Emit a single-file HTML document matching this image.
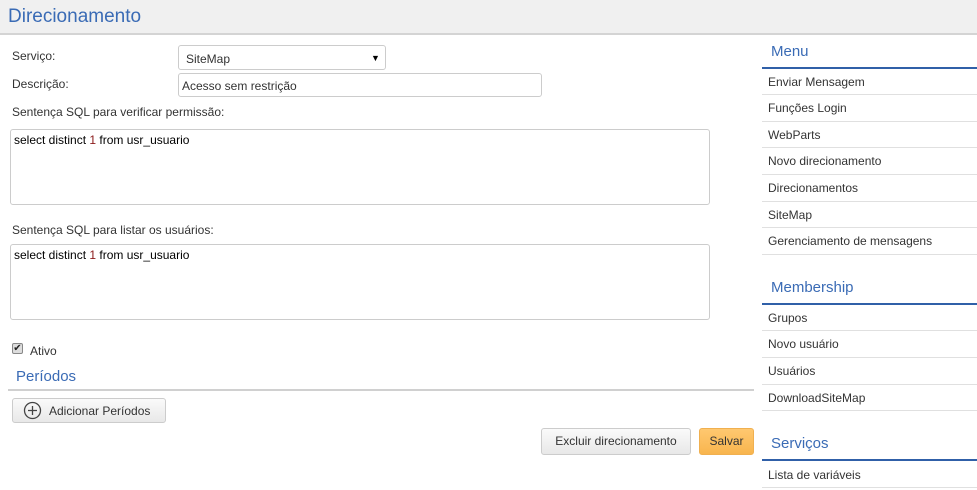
<!DOCTYPE html>
<html><head><meta charset="utf-8"><style>
*{box-sizing:border-box;margin:0;padding:0}
body{width:977px;height:490px;overflow:hidden;background:#fff;font-family:"Liberation Sans",sans-serif;font-size:12px;color:#333;position:relative}
.a{position:absolute;white-space:nowrap}
.hdr{left:0;top:0;width:977px;height:35px;background:#f0f0f0;border-bottom:2px solid #d4d4d4}
.blue{color:#3a6bb5}
.box{position:absolute;border:1px solid #ccc;border-radius:3px;background:#fff}
.sh{position:absolute;left:762px;width:215px;height:2px;background:#3060a8}
.sep{position:absolute;left:762px;width:215px;height:1px;background:#e0e0e0}
.mi{position:absolute;left:768px;font-size:12px;color:#333}
.btn{position:absolute;border:1px solid #ccc;border-radius:3px;background:linear-gradient(#fafafa,#e8e8e8);font-size:12px;color:#333;text-align:center}
</style></head><body>
<div class="a hdr"></div>
<div class="a blue" style="left:8px;top:6px;font-size:19px">Direcionamento</div>

<div class="a" style="left:12px;top:49px">Serviço:</div>
<div class="box" style="left:178px;top:45px;width:208px;height:25px"></div>
<div class="a" style="left:186px;top:52px">SiteMap</div>
<div class="a" style="left:371px;top:53px;font-size:9px;color:#000">▼</div>
<div class="a" style="left:12px;top:77px">Descrição:</div>
<div class="box" style="left:178px;top:73px;width:364px;height:24px"></div>
<div class="a" style="left:182px;top:79px">Acesso sem restrição</div>
<div class="a" style="left:12px;top:105px">Sentença SQL para verificar permissão:</div>
<div class="box" style="left:10px;top:129px;width:700px;height:76px"></div>
<div class="a" style="left:14px;top:133px;color:#000">select distinct <span style="color:#8b1a1a">1</span> from usr_usuario</div>
<div class="a" style="left:12px;top:223px">Sentença SQL para listar os usuários:</div>
<div class="box" style="left:10px;top:244px;width:700px;height:76px"></div>
<div class="a" style="left:14px;top:248px;color:#000">select distinct <span style="color:#8b1a1a">1</span> from usr_usuario</div>

<div class="a" style="left:12px;top:343px;width:11px;height:11px;border:1px solid #888;border-radius:2px;background:#ddd;font-size:10px;line-height:9px;text-align:center;color:#222">✔</div>
<div class="a" style="left:30px;top:344px">Ativo</div>
<div class="a blue" style="left:16px;top:368px;font-size:15px">Períodos</div>
<div class="a" style="left:8px;top:389px;width:746px;height:2px;background:#d0d0d0"></div>
<div class="btn" style="left:12px;top:398px;width:154px;height:25px"></div>
<svg class="a" style="left:23px;top:401px" width="19" height="19" viewBox="0 0 19 19"><circle cx="9.5" cy="9.5" r="8" fill="none" stroke="#444" stroke-width="1.3"/><path d="M9.5 5v9M5 9.5h9" stroke="#444" stroke-width="1.3"/></svg>
<div class="a" style="left:49px;top:404px">Adicionar Períodos</div>
<div class="btn" style="left:541px;top:428px;width:150px;height:27px;line-height:25px">Excluir direcionamento</div>
<div class="btn" style="left:699px;top:428px;width:55px;height:27px;line-height:25px;background:linear-gradient(#ffc870,#f8b54e);border-color:#f0b050">Salvar</div>

<div class="a blue" style="left:771px;top:43px;font-size:15px">Menu</div>
<div class="sh" style="top:67px"></div>
<div class="mi" style="top:75px">Enviar Mensagem</div><div class="sep" style="top:94px"></div>
<div class="mi" style="top:101px">Funções Login</div><div class="sep" style="top:121px"></div>
<div class="mi" style="top:128px">WebParts</div><div class="sep" style="top:147px"></div>
<div class="mi" style="top:154px">Novo direcionamento</div><div class="sep" style="top:174px"></div>
<div class="mi" style="top:181px">Direcionamentos</div><div class="sep" style="top:201px"></div>
<div class="mi" style="top:208px">SiteMap</div><div class="sep" style="top:227px"></div>
<div class="mi" style="top:234px">Gerenciamento de mensagens</div><div class="sep" style="top:254px"></div>

<div class="a blue" style="left:771px;top:279px;font-size:15px">Membership</div>
<div class="sh" style="top:303px"></div>
<div class="mi" style="top:311px">Grupos</div><div class="sep" style="top:330px"></div>
<div class="mi" style="top:337px">Novo usuário</div><div class="sep" style="top:357px"></div>
<div class="mi" style="top:364px">Usuários</div><div class="sep" style="top:384px"></div>
<div class="mi" style="top:391px">DownloadSiteMap</div><div class="sep" style="top:410px"></div>

<div class="a blue" style="left:771px;top:435px;font-size:15px">Serviços</div>
<div class="sh" style="top:459px"></div>
<div class="mi" style="top:468px">Lista de variáveis</div><div class="sep" style="top:487px"></div>
</body></html>
